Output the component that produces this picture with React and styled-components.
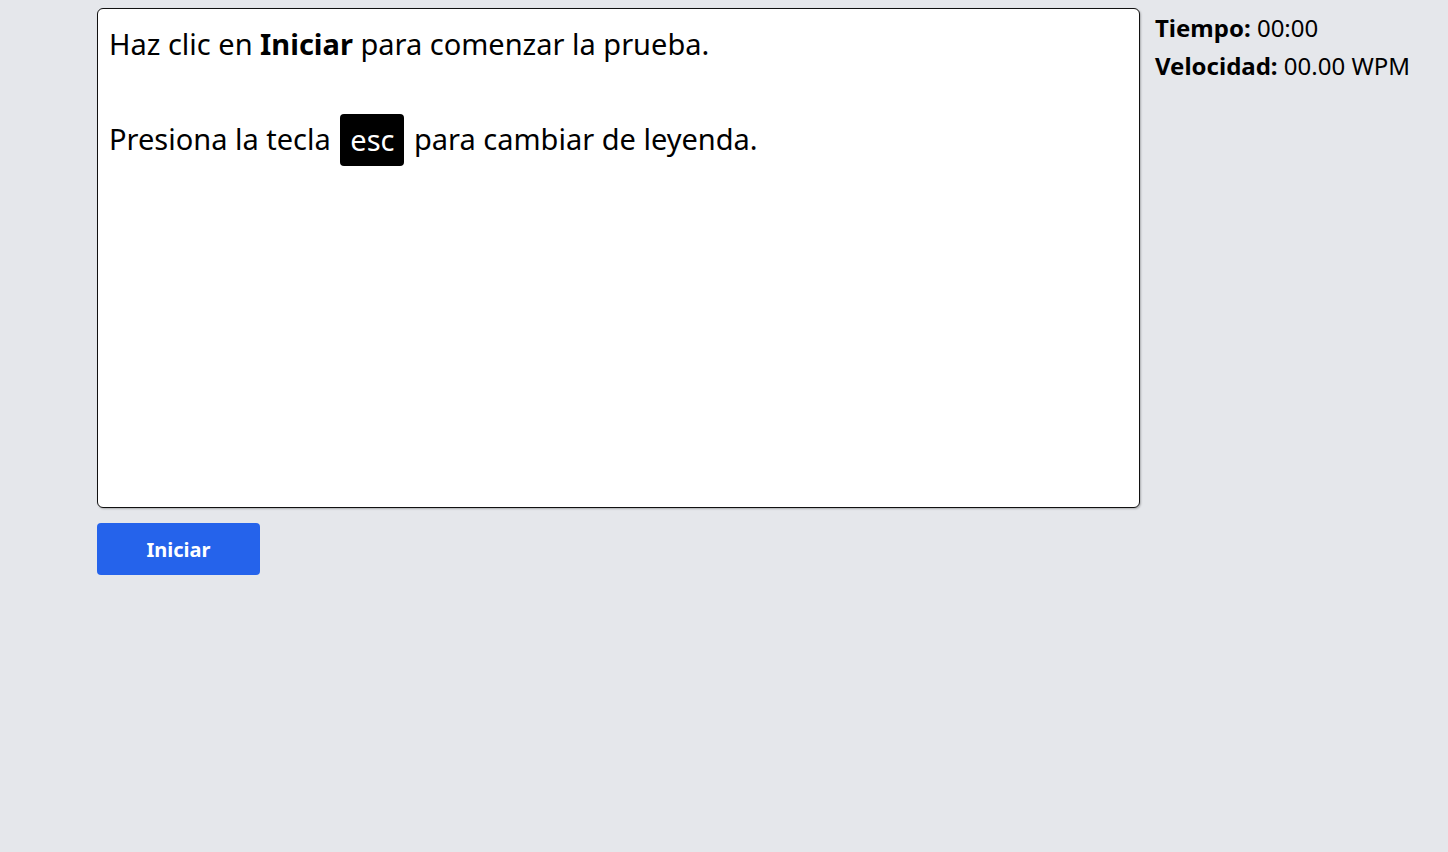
import React from "react";
import styled, { createGlobalStyle } from "styled-components";

const Global = createGlobalStyle`
  html, body { margin: 0; padding: 0; background: #e5e7eb; }
  body { font-family: "Noto Sans", "Open Sans", sans-serif; color: #000; }
`;

const Page = styled.div`
  display: flex;
  align-items: flex-start;
  gap: 15px;
  padding: 8px 0 0 97px;
  min-height: 844px;
`;

const Column = styled.div`
  display: flex;
  flex-direction: column;
  gap: 15px;
`;

const TextBox = styled.div`
  box-sizing: border-box;
  width: 1043px;
  height: 500px;
  background: #fff;
  border: 1px solid #111;
  border-radius: 6px;
  box-shadow: 1px 1px 2px rgba(0, 0, 0, 0.25);
  padding: 14px 11px;
  font-size: 29px;
  line-height: 42px;
`;

const Line = styled.p`
  margin: 0 0 ${(p) => p.$gap || 0}px 0;
`;

const Key = styled.span`
  display: inline-block;
  background: #000;
  color: #fff;
  border-radius: 4px;
  padding: 4px 10px;
  margin: 0 2px 5px;
  line-height: 44px;
  vertical-align: middle;
`;

const StartButton = styled.button`
  width: 163px;
  height: 52px;
  border: none;
  border-radius: 4px;
  background: #2563eb;
  color: #fff;
  font-family: "Noto Sans", sans-serif;
  font-weight: 700;
  font-size: 20px;
  cursor: pointer;
`;

const Stats = styled.div`
  display: flex;
  flex-direction: column;
  gap: 6px;
  padding-top: 4px;
  font-size: 24px;
  line-height: 32px;
`;

const Stat = styled.div``;

export default function App() {
  return (
    <>
      <Global />
      <Page>
        <Column>
          <TextBox>
            <Line $gap={49}>
              Haz clic en <b>Iniciar</b> para comenzar la prueba.
            </Line>
            <Line>
              Presiona la tecla <Key>esc</Key> para cambiar de leyenda.
            </Line>
          </TextBox>
          <div>
            <StartButton>Iniciar</StartButton>
          </div>
        </Column>
        <Stats>
          <Stat>
            <b>Tiempo:</b> 00:00
          </Stat>
          <Stat>
            <b>Velocidad:</b> 00.00 WPM
          </Stat>
        </Stats>
      </Page>
    </>
  );
}
